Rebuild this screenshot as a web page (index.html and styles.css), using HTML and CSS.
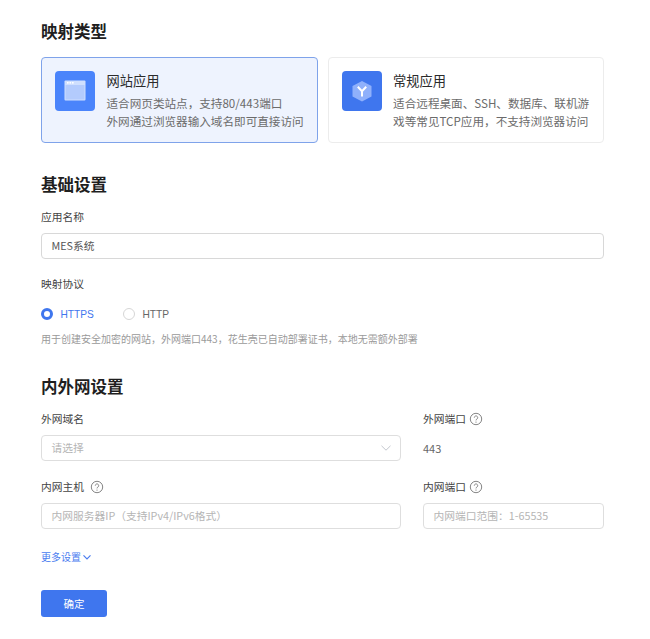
FILE: index.html
```html
<!DOCTYPE html>
<html lang="zh-CN">
<head>
<meta charset="utf-8">
<title>映射</title>
<link rel="stylesheet" href="styles.css">
</head>
<body>
<main class="page">
  <h2 class="title title-first">映射类型</h2>
  <div class="cards">
    <div class="card card-active">
      <div class="card-icon icon-web">
        <svg width="32" height="32" viewBox="0 0 32 32"><rect x="5.500" y="5.500" width="21" height="20" rx="1" fill="#cfdffe"/><rect x="8" y="7" width="1.600" height="1.600" fill="#fff"/><rect x="10.500" y="7" width="1.600" height="1.600" fill="#fff"/><rect x="13" y="7" width="1.600" height="1.600" fill="#fff"/><rect x="6.500" y="10" width="19" height="14.500" fill="#b3cbfd"/></svg>
      </div>
      <div class="card-body">
        <div class="card-name">网站应用</div>
        <div class="card-desc">适合网页类站点，支持80/443端口</div>
        <div class="card-desc">外网通过浏览器输入域名即可直接访问</div>
      </div>
    </div>
    <div class="card">
      <div class="card-icon icon-app">
        <svg width="32" height="32" viewBox="0 0 32 32"><path d="M16 6l9.500 5v10.500L16 26.500l-9.500-5V11z" fill="#8fb0fb"/><path d="M11.800 11.800L16 16.200l4.200-4.400M16 16.200v5.300" fill="none" stroke="#fff" stroke-width="2"/></svg>
      </div>
      <div class="card-body">
        <div class="card-name">常规应用</div>
        <div class="card-desc">适合远程桌面、SSH、数据库、联机游</div>
        <div class="card-desc">戏等常见TCP应用，不支持浏览器访问</div>
      </div>
    </div>
  </div>

  <h2 class="title title-basic">基础设置</h2>
  <div class="label label-name">应用名称</div>
  <div class="input input-filled">MES系统</div>
  <div class="label label-protocol">映射协议</div>
  <div class="radios">
    <span class="radio radio-on"><i class="dot"></i>HTTPS</span>
    <span class="radio"><i class="dot"></i>HTTP</span>
  </div>
  <div class="hint">用于创建安全加密的网站，外网端口443，花生壳已自动部署证书，本地无需额外部署</div>

  <h2 class="title title-net">内外网设置</h2>
  <div class="grid">
    <div class="label">外网域名</div>
    <div class="label">外网端口<svg class="help" width="14" height="14" viewBox="0 0 14 14"><circle cx="7" cy="7" r="5.700" fill="none" stroke="#777" stroke-width="0.900"/><path d="M5.300 5.600a1.700 1.700 0 1 1 2.700 1.400c-.6.400-1 .7-1 1.400" fill="none" stroke="#777" stroke-width="0.900"/><circle cx="7" cy="10.100" r="0.600" fill="#777"/></svg></div>
    <div class="input input-select">请选择<svg width="12" height="12" viewBox="0 0 12 12"><path d="M1.500 3.800L6 8.200l4.500-4.400" fill="none" stroke="#c4c8cf" stroke-width="1"/></svg></div>
    <div class="value">443</div>
    <div class="label label-row2">内网主机<svg class="help help-wide" width="14" height="14" viewBox="0 0 14 14"><circle cx="7" cy="7" r="5.700" fill="none" stroke="#777" stroke-width="0.900"/><path d="M5.300 5.600a1.700 1.700 0 1 1 2.700 1.400c-.6.400-1 .7-1 1.400" fill="none" stroke="#777" stroke-width="0.900"/><circle cx="7" cy="10.100" r="0.600" fill="#777"/></svg></div>
    <div class="label label-row2">内网端口<svg class="help" width="14" height="14" viewBox="0 0 14 14"><circle cx="7" cy="7" r="5.700" fill="none" stroke="#777" stroke-width="0.900"/><path d="M5.300 5.600a1.700 1.700 0 1 1 2.700 1.400c-.6.400-1 .7-1 1.400" fill="none" stroke="#777" stroke-width="0.900"/><circle cx="7" cy="10.100" r="0.600" fill="#777"/></svg></div>
    <div class="input">内网服务器IP（支持IPv4/IPv6格式）</div>
    <div class="input">内网端口范围：1-65535</div>
  </div>
  <div class="more">更多设置<svg width="10" height="10" viewBox="0 0 10 10"><path d="M1.500 3.300L5 6.800l3.500-3.500" fill="none" stroke="#4a7cf0" stroke-width="1.200"/></svg></div>
  <button class="submit" type="button">确定</button>
</main>
</body>
</html>
```
FILE: styles.css
```css
* { box-sizing: border-box; }
html, body { margin: 0; background: #fff; }
body {
  font-family: "Noto Sans CJK SC", "Liberation Sans", sans-serif;
  color: #333;
  font-size: 11px;
}
.page { width: 650px; height: 639px; padding: 20px 46px 0 41px; overflow: hidden; }
.title { margin: 0; font-size: 16.5px; line-height: 22px; font-weight: 700; color: #1f1f1f; }
.cards { display: flex; gap: 10px; margin-top: 15px; }
.card {
  flex: 1 1 0; height: 86px; display: flex; padding: 13px;
  border: 1px solid #ececec; border-radius: 4px; background: #fff;
}
.card-active { flex: 0 0 276px; background: #eef3fe; border-color: #7fa3ea; }
.card-icon { width: 40px; height: 40px; border-radius: 4px; display: flex; align-items: center; justify-content: center; flex: none; }
.icon-web { background: #4a84fb; }
.icon-app { background: #3f76ee; }
.card-body { margin-left: 11.500px; }
.card-name { font-size: 13.250px; line-height: 18px; color: #2b2b2b; margin-top: 1px; margin-bottom: 4px; }
.card-desc { font-size: 11.600px; line-height: 18px; color: #6b6b6b; white-space: nowrap; }
.title-basic { margin-top: 30px; }
.label { font-size: 10.750px; line-height: 14px; color: #444; display: flex; align-items: center; }
.label-name { margin-top: 15px; }
.input {
  height: 26px; border: 1px solid #dedede; border-radius: 4px; padding: 0 9.500px;
  font-size: 10.750px; line-height: 24px; color: #b5b5b5; background: #fff;
}
.input-filled { margin-top: 9px; color: #555; border-color: #d8d8d8; }
.label-protocol { margin-top: 18px; }
.radios { display: flex; gap: 29px; margin-top: 15px; height: 16px; align-items: center; }
.radio { display: inline-flex; align-items: center; gap: 7.500px; font-family: "Liberation Sans", sans-serif; font-size: 10.200px; color: #666; }
.radio-on { color: #3f76ee; }
.dot { width: 12px; height: 12px; border-radius: 50%; border: 1px solid #d6d6d6; background: #fff; }
.radio-on .dot { border: 3.500px solid #3f76ee; }
.hint { margin-top: 10px; font-size: 10px; line-height: 14px; color: #9a9a9a; white-space: nowrap; }
.title-net { margin-top: 29px; }
.grid { display: grid; grid-template-columns: 360px 181px; column-gap: 22px; margin-top: 15px; }
.input-select { margin-top: 9px; display: flex; justify-content: space-between; align-items: center; padding-right: 8px; }
.value { margin-top: 9px; font-size: 11px; line-height: 27px; color: #666; }
.label-row2 { margin-top: 18px; }
.grid .input:nth-last-child(-n+2) { margin-top: 9px; }
.help { margin-left: 3px; }
.help-wide { margin-left: 6px; }
.more { display: flex; align-items: center; gap: 1px; margin-top: 21px; font-size: 10px; line-height: 14px; color: #4a7cf0; }
.submit {
  display: block; width: 66px; height: 27px; margin-top: 26px; border: 0; border-radius: 3px;
  background: #3f76ee; color: #fff; font-family: inherit; font-size: 10.500px;
}
```
